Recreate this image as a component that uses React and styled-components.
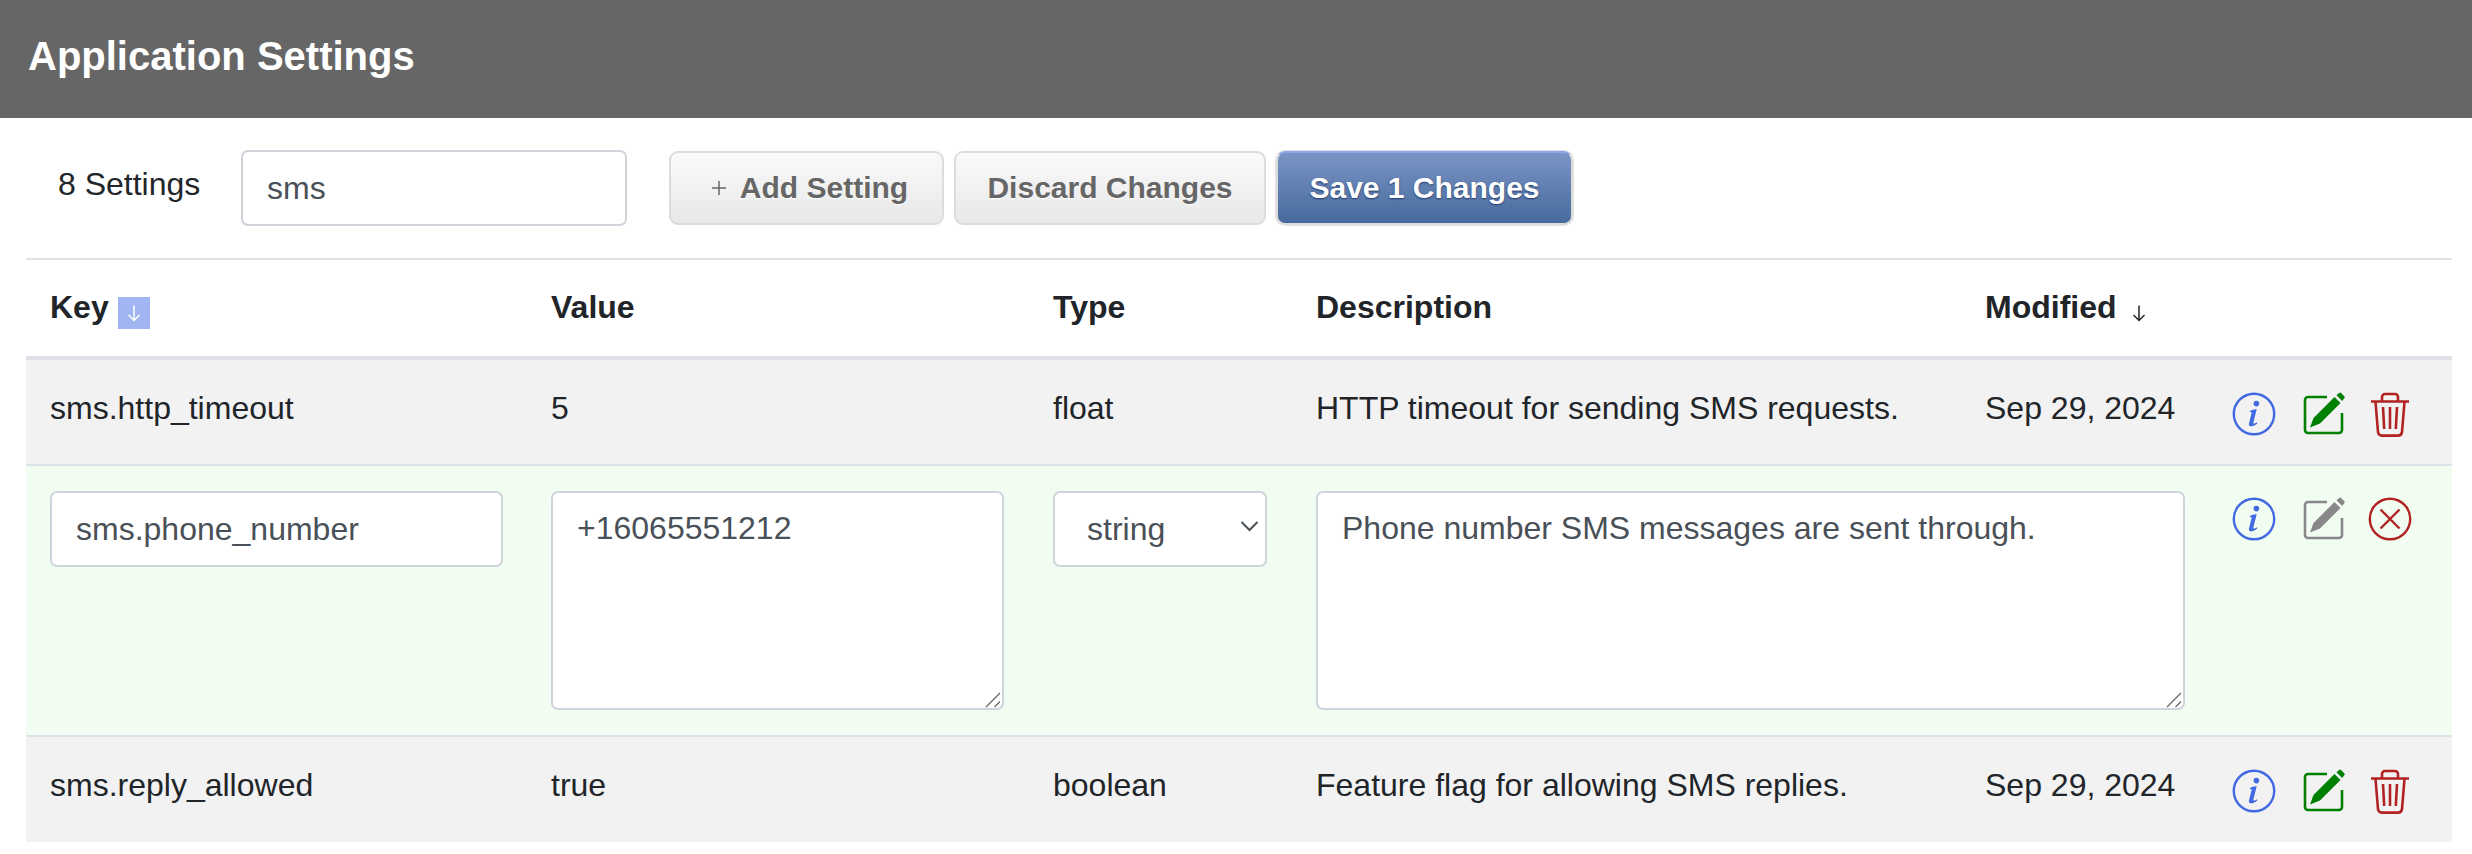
import React from "react";
import styled, { createGlobalStyle } from "styled-components";

const Global = createGlobalStyle`
  html, body { margin: 0; padding: 0; background: #fff; }
  body { font-family: "Liberation Sans", Arial, sans-serif; font-size: 32px; line-height: 45px; color: #212529; }
`;

const Page = styled.div`width: 2472px; height: 854px; overflow: hidden;`;
const TitleBar = styled.header`
  height: 118px; background: #666; display: flex; align-items: center; padding: 0 0 0 28px;
`;
const Title = styled.h1`margin: 0; color: #fff; font-size: 40px; font-weight: 700; line-height: 48px; position: relative; top: -3px;`;
const Content = styled.main`margin: 0 20px 0 26px;`;
const Toolbar = styled.div`
  height: 142px; box-sizing: border-box; border-bottom: 2px solid #dee2e6;
  display: flex; align-items: flex-start; padding-top: 32px;
`;
const Count = styled.span`margin-left: 32px; width: 183px; line-height: 45px; margin-top: 12px;`;
const Search = styled.input`
  width: 386px; height: 76px; box-sizing: border-box; border: 2px solid #ced4da; border-radius: 7px;
  padding: 0 24px; font: 32px "Liberation Sans", Arial, sans-serif; color: #495057; background: #fff; outline: none;
`;
const Buttons = styled.div`display: flex; gap: 10px; margin: 1px 0 0 42px;`;
const Button = styled.button`
  height: 74px; box-sizing: border-box; border-radius: 9px; border: 2px solid #dcdcdc;
  padding: 0 0 0 ${p => p.$pad || 0}px; width: ${p => p.$w}px; font: 700 30px "Liberation Sans", Arial, sans-serif;
  color: #666; text-shadow: 0 1px 1px #fff;
  background: linear-gradient(#fafafa, #e8e8e8);
  display: flex; align-items: center; justify-content: center; gap: 13px;
`;
const SaveButton = styled(Button)`
  color: #fff; text-shadow: 0 1px 2px #223a66;
  background: linear-gradient(#7b94c6, #476a9c);
  border-top-color: #8ca6e6; box-shadow: 0 0 0 1px #e2e2e2;
`;
const PlusMark = styled.svg`width: 16px; height: 16px; color: #666;`;

const Grid = styled.div`
  display: grid; grid-template-columns: 501px 502px 263px 669px 249px 242px;
  background: ${p => p.$bg || "transparent"};
  border-bottom: ${p => p.$border}px solid #dee2e6;
`;
const HeadCell = styled.div`
  height: 96px; box-sizing: border-box; padding: 25px 0 0 24px; font-weight: 700; line-height: 45px;
  display: flex; align-items: flex-start; gap: ${p => p.$gap}px;
`;
const Cell = styled.div`padding: 26px 0 0 24px; height: ${p => p.$h}px; box-sizing: border-box; white-space: nowrap;`;
const EditCell = styled.div`padding: 25px 0 25px 24px; grid-column: span ${p => p.$span || 1}; box-sizing: border-box;`;
const fieldBase = `
  display: block; box-sizing: border-box; border: 2px solid #ced4da; border-radius: 7px; background: #fff;
  font: 32px/45px "Liberation Sans", Arial, sans-serif; color: #495057; outline: none; margin: 0;
`;
const KeyInput = styled.input`${fieldBase} width: 453px; height: 76px; padding: 0 24px;`;
const AreaWrap = styled.div`position: relative; width: ${p => p.$w}px; height: 219px;`;
const ValueArea = styled.textarea`${fieldBase} width: 100%; height: 100%; padding: 13px 24px; resize: none;`;
const Grip = styled.svg`position: absolute; right: 3px; bottom: 2px; width: 16px; height: 16px; pointer-events: none;`;
const SelectWrap = styled.div`position: relative; width: 214px; height: 76px;`;
const TypeSelect = styled.select`${fieldBase} appearance: none; width: 214px; height: 76px; padding: 0 0 0 32px;`;
const Chevron = styled.svg`position: absolute; right: 8px; top: 29px; width: 19px; height: 12px; pointer-events: none; color: #495057;`;
const Actions = styled.div`display: flex; align-items: flex-start; padding: ${p => p.$top}px 0 0 22px; box-sizing: border-box;`;
const IconSlot = styled.span`display: block; width: ${p => p.$w}px; height: 46px; flex: none;`;
const Svg = styled.svg`display: block; overflow: visible;`;
const SortBox = styled.span`
  width: 32px; height: 32px; background: #a0b5f2; color: #fff; margin-top: 12px; display: flex; align-items: center; justify-content: center;
`;
const SortPlain = styled.span`width: 20px; height: 32px; color: #212529; margin-top: 12px; display: flex; align-items: center; justify-content: center;`;

const DownArrow = () => (
  <svg width="16" height="18" viewBox="0 0 16 18" fill="none" stroke="currentColor" strokeWidth="1.5">
    <path d="M8 1.5v15M2.5 11 8 16.5 13.5 11" />
  </svg>
);

const Info = () => (
  <Svg width="44" height="44" viewBox="0 0 44 44">
    <circle cx="22" cy="22" r="20.2" fill="none" stroke="#4169e1" strokeWidth="2.4" />
    <circle cx="24.4" cy="11.6" r="2.8" fill="#4169e1" />
    <path d="M17.5 19.5c2-1.6 4.8-2.4 7.2-2.2l-3.4 13.4c-.2 1.2.9 1.4 3.6-.5l.5 1c-2.6 2.4-5 3.4-6.8 3.1-1.5-.2-2-1.3-1.6-2.9l2.6-10.3c.2-.9-.2-1.2-1.6-1z" fill="#4169e1" />
  </Svg>
);

const Edit = ({ color }) => (
  <Svg width="42" height="42" viewBox="0 0 42 42">
    <path d="M25 5H6a3 3 0 0 0-3 3v30a3 3 0 0 0 3 3h31a3 3 0 0 0 3-3V21" fill="none" stroke={color} strokeWidth="2.6" />
    <path d="M32.5 5 11.5 26l-3.5 9.6 10-4L38.5 11z" fill={color} />
    <path d="M34.5 3.2l2.6-2.2a1.4 1.4 0 0 1 2 .1l3.2 3.2a1.4 1.4 0 0 1 0 2l-2.2 2.7z" fill={color} />
  </Svg>
);

const Trash = () => (
  <Svg width="40" height="46" viewBox="0 0 40 46" fill="none" stroke="#b22222" strokeWidth="2.6">
    <path d="M1 9.5h38" />
    <path d="M12 9V5a3 3 0 0 1 3-3h10a3 3 0 0 1 3 3v4" />
    <path d="M5.5 10l2.5 30a4 4 0 0 0 4 3.6h16a4 4 0 0 0 4-3.600l2.500-30" />
    <path d="M13 15l1.200 22M20 15v22M27 15l-1.200 22" />
  </Svg>
);

const CloseCircle = () => (
  <Svg width="44" height="44" viewBox="0 0 44 44" fill="none" stroke="#b22222" strokeWidth="2.4">
    <circle cx="22" cy="22" r="20.2" />
    <path d="M12.500 12.500l19 19M31.500 12.500l-19 19" />
  </Svg>
);

const Area = ({ w, value }) => (
  <AreaWrap $w={w}>
    <ValueArea defaultValue={value} />
    <Grip viewBox="0 0 16 16" fill="none" stroke="#666" strokeWidth="1.3">
      <path d="M1 15 15 1M9.500 15 15 9.500" />
    </Grip>
  </AreaWrap>
);

const Row = ({ name, value, type, desc, date, h, border }) => (
  <Grid $bg="#f2f2f2" $border={border}>
    <Cell $h={h}>{name}</Cell>
    <Cell $h={h}>{value}</Cell>
    <Cell $h={h}>{type}</Cell>
    <Cell $h={h}>{desc}</Cell>
    <Cell $h={h}>{date}</Cell>
    <Actions $top={32}>
      <IconSlot $w={70}><Info /></IconSlot>
      <IconSlot $w={68}><Edit color="#008000" /></IconSlot>
      <IconSlot $w={40}><Trash /></IconSlot>
    </Actions>
  </Grid>
);

export default function App() {
  return (
    <Page>
      <Global />
      <TitleBar><Title>Application Settings</Title></TitleBar>
      <Content>
        <Toolbar>
          <Count>8 Settings</Count>
          <Search defaultValue="sms" />
          <Buttons>
            <Button $w={275} $pad={6}>
              <PlusMark viewBox="0 0 16 16" fill="none" stroke="currentColor" strokeWidth="1.5"><path d="M8 1v14M1 8h14" /></PlusMark>
              Add Setting
            </Button>
            <Button $w={312}>Discard Changes</Button>
            <SaveButton $w={297}>Save 1 Changes</SaveButton>
          </Buttons>
        </Toolbar>
        <Grid $border={4}>
          <HeadCell $gap={9}>Key<SortBox><DownArrow /></SortBox></HeadCell>
          <HeadCell>Value</HeadCell>
          <HeadCell>Type</HeadCell>
          <HeadCell>Description</HeadCell>
          <HeadCell $gap={12}>Modified<SortPlain><DownArrow /></SortPlain></HeadCell>
          <HeadCell />
        </Grid>
        <Row name="sms.http_timeout" value="5" type="float" desc="HTTP timeout for sending SMS requests." date="Sep 29, 2024" h={104} border={2} />
        <Grid $bg="#f1fdf1" $border={2}>
          <EditCell><KeyInput defaultValue="sms.phone_number" /></EditCell>
          <EditCell><Area w={453} value="+16065551212" /></EditCell>
          <EditCell>
            <SelectWrap>
              <TypeSelect defaultValue="string">
                <option>string</option>
                <option>float</option>
                <option>boolean</option>
              </TypeSelect>
              <Chevron viewBox="0 0 19 12" fill="none" stroke="currentColor" strokeWidth="2"><path d="M1.500 2l8 8 8-8" /></Chevron>
            </SelectWrap>
          </EditCell>
          <EditCell $span={2}><Area w={869} value="Phone number SMS messages are sent through." /></EditCell>
          <Actions $top={31}>
            <IconSlot $w={70}><Info /></IconSlot>
            <IconSlot $w={66}><Edit color="#888888" /></IconSlot>
            <IconSlot $w={44}><CloseCircle /></IconSlot>
          </Actions>
        </Grid>
        <Row name="sms.reply_allowed" value="true" type="boolean" desc="Feature flag for allowing SMS replies." date="Sep 29, 2024" h={105} border={0} />
      </Content>
    </Page>
  );
}
